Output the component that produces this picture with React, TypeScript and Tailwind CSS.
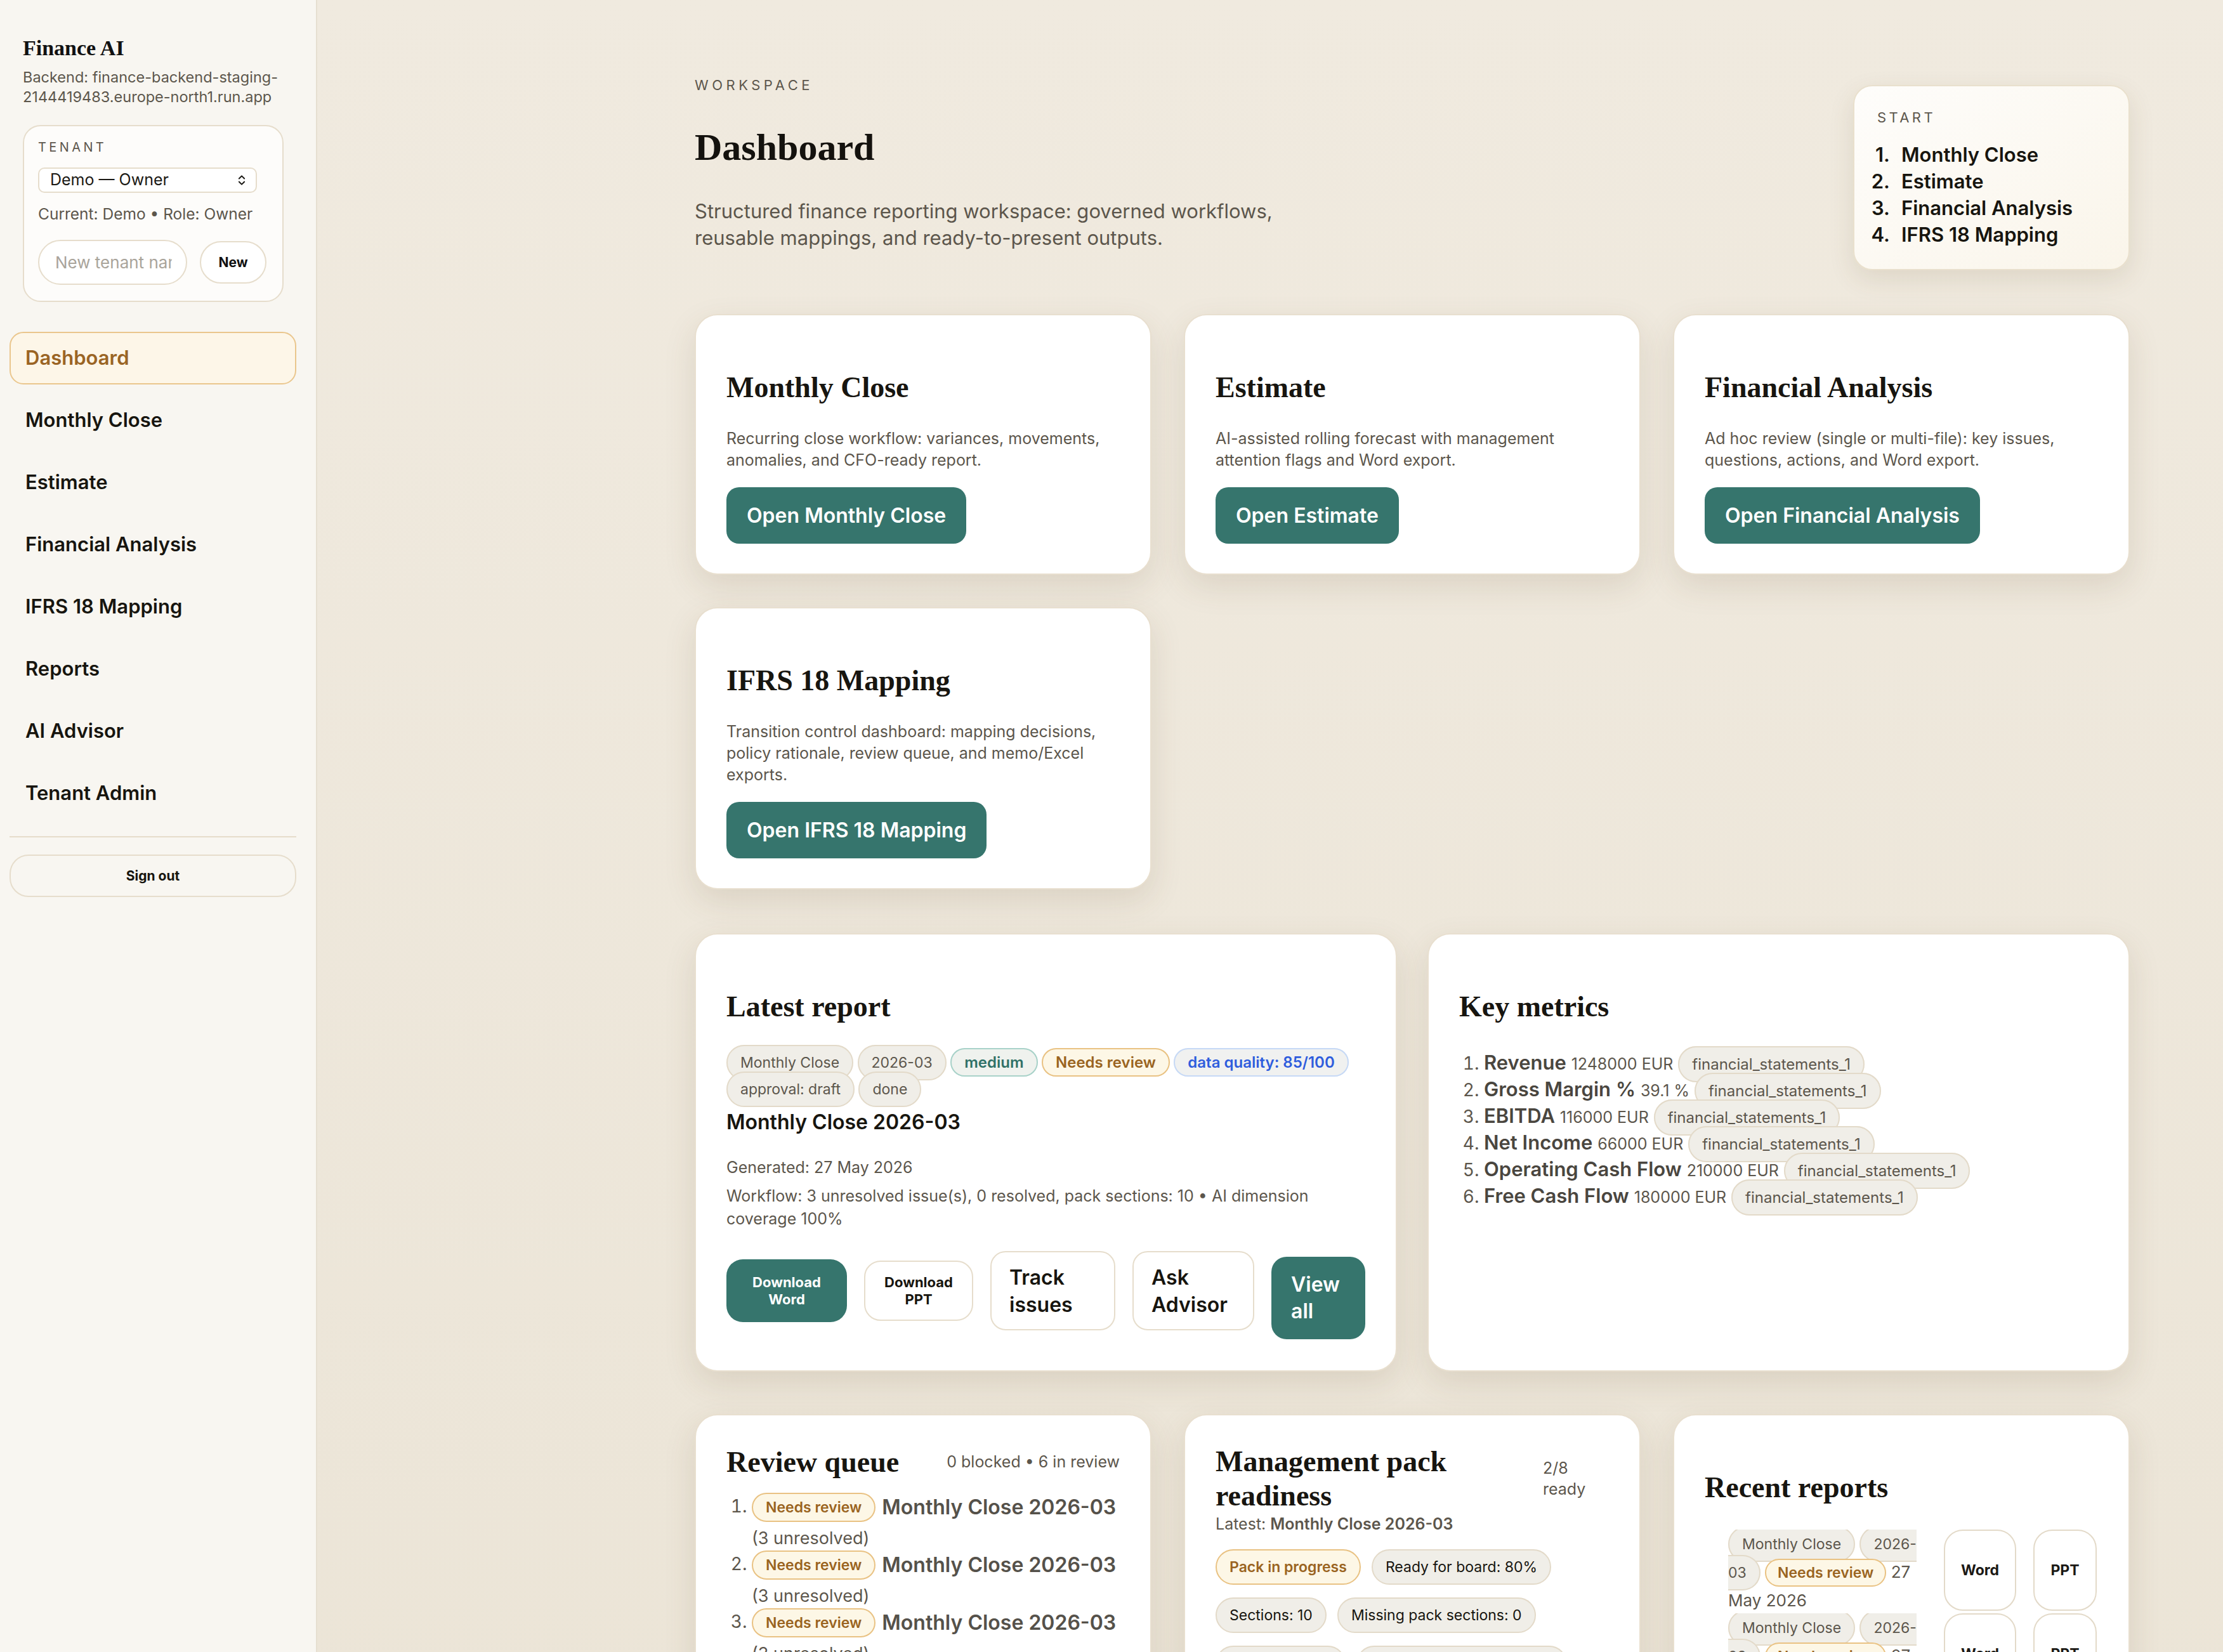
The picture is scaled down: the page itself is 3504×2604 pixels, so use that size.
import React from "react";
import { ChevronsUpDown } from "lucide-react";

const serif = "font-['Liberation_Serif','Times_New_Roman',serif]";

const cardBase =
  "rounded-[36px] border-2 border-[#e8dfcf] bg-white shadow-[0_18px_50px_rgba(94,72,36,0.13)]";

function GrayPill({ children, big }: { children: React.ReactNode; big?: boolean }) {
  return (
    <span
      className={
        big
          ? "inline rounded-full border-2 border-[#e3dac9] bg-[#f0eee8] px-[20px] py-[12px] text-[24px] text-[#5c564c]"
          : "inline rounded-full border-2 border-[#e3dac9] bg-[#f0eee8] px-[20px] py-[12px] text-[23px] text-[#5c564c]"
      }
    >
      {children}
    </span>
  );
}

function AmberPill({ children }: { children: React.ReactNode }) {
  return (
    <span className="inline rounded-full border-2 border-[#e9c283] bg-[#fdf7e6] px-[18px] py-[6px] text-[23px] font-semibold text-[#9a6421]">
      {children}
    </span>
  );
}

function WorkflowCard({ title, desc, cta }: { title: string; desc: React.ReactNode; cta: string }) {
  return (
    <div className={`${cardBase} px-[48px] pt-[86px] pb-[47px]`}>
      <h2 className={`${serif} text-[46px] font-bold leading-[56px] text-[#171510]`}>{title}</h2>
      <p className="mt-[35px] text-[25px] leading-[34px] text-[#5c564c]">{desc}</p>
      <button className="mt-[26px] flex h-[89px] items-center rounded-[20px] bg-[#36756d] px-[32px] text-[32px] font-semibold text-white">
        {cta}
      </button>
    </div>
  );
}

const navItems = [
  "Dashboard",
  "Monthly Close",
  "Estimate",
  "Financial Analysis",
  "IFRS 18 Mapping",
  "Reports",
  "AI Advisor",
  "Tenant Admin",
];

const startItems = ["Monthly Close", "Estimate", "Financial Analysis", "IFRS 18 Mapping"];

const metrics: [string, string][] = [
  ["Revenue", "1248000 EUR"],
  ["Gross Margin %", "39.1 %"],
  ["EBITDA", "116000 EUR"],
  ["Net Income", "66000 EUR"],
  ["Operating Cash Flow", "210000 EUR"],
  ["Free Cash Flow", "180000 EUR"],
];

function RecentItem() {
  return (
    <li className="flex items-start">
      <div className="h-[128px] w-[304px] shrink-0 overflow-hidden whitespace-nowrap text-[26px] leading-[43px] text-[#5c564c]">
        <GrayPill>Monthly Close</GrayPill>{" "}
        <GrayPill>
          2026-
          <br />
          03
        </GrayPill>{" "}
        <AmberPill>Needs review</AmberPill> 27
        <br />
        May 2026
      </div>
      <button className="ml-[36px] flex h-[128px] w-[114px] shrink-0 items-center justify-center rounded-[30px] border-2 border-[#e3dac9] bg-white text-[23px] font-bold text-[#1b1915]">
        Word
      </button>
      <button className="ml-[27px] flex h-[128px] w-[100px] shrink-0 items-center justify-center rounded-[30px] border-2 border-[#e3dac9] bg-white text-[23px] font-bold text-[#1b1915]">
        PPT
      </button>
    </li>
  );
}

export default function App() {
  return (
    <div className="flex min-h-screen w-full font-['Inter','Liberation_Sans',sans-serif] text-[#1b1915]">
      {/* Sidebar */}
      <aside className="w-[500px] shrink-0 border-r-2 border-[#e6dfd1] bg-[#f8f6f1] pl-[15px] pr-[31px] pt-[56px]">
        <div className="px-[21px]">
          <div className={`${serif} text-[34px] font-bold leading-[40px] text-[#111]`}>Finance AI</div>
          <div className="mt-[10px] whitespace-nowrap text-[23.5px] leading-[31px] text-[#5c564c]">
            Backend: finance-backend-staging-
            <br />
            2144419483.europe-north1.run.app
          </div>
        </div>

        <div className="ml-[21px] mt-[29px] w-[411px] rounded-[28px] border-2 border-[#e6ddcc] bg-[#fdfcfa] px-[22px] pb-[25px] pt-[21px]">
          <div className="text-[20px] leading-[24px] tracking-[0.22em] text-[#5c564c]">TENANT</div>
          <div className="mt-[20px] flex h-[40px] w-[345px] items-center justify-between rounded-[10px] border-2 border-[#e6ddcc] bg-white pl-[17px] pr-[12px] text-[25px] text-[#1b1915]">
            <span>Demo — Owner</span>
            <ChevronsUpDown size={20} strokeWidth={2.4} />
          </div>
          <div className="mt-[18px] whitespace-nowrap text-[24.5px] leading-[30px] text-[#5c564c]">
            Current: Demo • Role: Owner
          </div>
          <div className="mt-[26px] flex items-center gap-[20px]">
            <div className="flex h-[71px] w-[235px] items-center rounded-full border-2 border-[#e6ddcc] bg-white pl-[25px] pr-[22px]">
              <span className="block w-full overflow-hidden whitespace-nowrap text-[26px] text-[#a9a49b]">
                New tenant name
              </span>
            </div>
            <button className="flex h-[67px] w-[105px] items-center justify-center rounded-full border-2 border-[#e6ddcc] bg-white text-[21px] font-bold text-[#111]">
              New
            </button>
          </div>
        </div>

        <nav className="mt-[47px] flex flex-col gap-[15px]">
          {navItems.map((item, i) => (
            <div
              key={item}
              className={
                i === 0
                  ? "flex h-[83px] items-center rounded-[22px] border-2 border-[#eac68d] bg-[#fdf6e8] px-[23px] text-[31px] font-semibold text-[#9a6424]"
                  : "flex h-[83px] items-center rounded-[22px] border-2 border-transparent px-[23px] text-[31px] font-semibold text-[#17150f]"
              }
            >
              {item}
            </div>
          ))}
        </nav>

        <div className="mt-[26px] border-t-2 border-[#e6dccb]" />
        <button className="mt-[27px] flex h-[67px] w-full items-center justify-center rounded-[30px] border-2 border-[#e6ddcc] text-[21px] font-bold text-[#17150f]">
          Sign out
        </button>
      </aside>

      {/* Main */}
      <main className="flex-1 bg-linear-to-b from-[#f0eadf] to-[#ebe4d6]">
        <div className="ml-[595px] flex w-[2262px] flex-col pb-[120px] pt-[119px]">
          {/* Header */}
          <div className="flex items-start justify-between">
            <div>
              <div className="text-[22px] leading-[30px] tracking-[0.25em] text-[#5c564c]">WORKSPACE</div>
              <h1 className={`${serif} mt-[47px] text-[60px] font-bold leading-[72px] text-[#14120e]`}>Dashboard</h1>
              <p className="mt-[44px] text-[31px] leading-[42px] text-[#5c564c]">
                Structured finance reporting workspace: governed workflows,
                <br />
                reusable mappings, and ready-to-present outputs.
              </p>
            </div>
            <div className="mt-[15px] w-[436px] rounded-[30px] border-2 border-[#e9e0cd] bg-linear-to-br from-[#fefdfb] to-[#faf5ea] px-[36px] pb-[33px] pt-[34px] shadow-[0_14px_40px_rgba(94,72,36,0.12)]">
              <div className="text-[22px] leading-[30px] tracking-[0.2em] text-[#5c564c]">START</div>
              <ol className="-ml-[14px] mt-[23px] text-[31px] font-semibold leading-[42px] text-[#17150f]">
                {startItems.map((s, i) => (
                  <li key={s} className="flex">
                    <span className="w-[34px] shrink-0 text-right">{i + 1}.</span>
                    <span className="ml-[18px]">{s}</span>
                  </li>
                ))}
              </ol>
            </div>
          </div>

          {/* Workflow cards */}
          <div className="mt-[69px] grid grid-cols-3 gap-x-[51px] gap-y-[51px]">
            <WorkflowCard
              title="Monthly Close"
              desc={
                <>
                  Recurring close workflow: variances, movements,
                  <br />
                  anomalies, and CFO-ready report.
                </>
              }
              cta="Open Monthly Close"
            />
            <WorkflowCard
              title="Estimate"
              desc={
                <>
                  AI-assisted rolling forecast with management
                  <br />
                  attention flags and Word export.
                </>
              }
              cta="Open Estimate"
            />
            <WorkflowCard
              title="Financial Analysis"
              desc={
                <>
                  Ad hoc review (single or multi-file): key issues,
                  <br />
                  questions, actions, and Word export.
                </>
              }
              cta="Open Financial Analysis"
            />
            <WorkflowCard
              title="IFRS 18 Mapping"
              desc={
                <>
                  Transition control dashboard: mapping decisions,
                  <br />
                  policy rationale, review queue, and memo/Excel
                  <br />
                  exports.
                </>
              }
              cta="Open IFRS 18 Mapping"
            />
          </div>

          {/* Latest report + Key metrics */}
          <div className="mt-[69px] grid grid-cols-2 gap-[48px]">
            <div className={`${cardBase} px-[48px] pt-[86px] pb-[49px]`}>
              <h2 className={`${serif} text-[46px] font-bold leading-[56px] text-[#171510]`}>Latest report</h2>
              <div className="mt-[39px] whitespace-nowrap text-[23px] leading-[42px]">
                <GrayPill>Monthly Close</GrayPill>{" "}
                <GrayPill>2026-03</GrayPill>{" "}
                <span className="inline rounded-full border-2 border-[#a8d2c9] bg-[#eff2ee] px-[20px] py-[6px] text-[24px] font-semibold text-[#2f7167]">
                  medium
                </span>{" "}
                <span className="inline rounded-full border-2 border-[#e9c283] bg-[#fdf7e6] px-[20px] py-[6px] text-[24px] font-semibold text-[#9a6421]">
                  Needs review
                </span>{" "}
                <span className="inline rounded-full border-2 border-[#c6d9f6] bg-[#f0f1f0] px-[20px] py-[6px] text-[24px] font-semibold text-[#2f5ddd]">
                  data quality: 85/100
                </span>
                <br />
                <GrayPill>approval: draft</GrayPill>{" "}
                <GrayPill>done</GrayPill>
              </div>
              <div className="mt-[11px] text-[32px] font-semibold leading-[40px] text-[#17150f]">Monthly Close 2026-03</div>
              <div className="mt-[34px] text-[25px] leading-[34px] text-[#5c564c]">Generated: 27 May 2026</div>
              <div className="mt-[10px] text-[25px] leading-[36px] text-[#5c564c]">
                Workflow: 3 unresolved issue(s), 0 resolved, pack sections: 10 • AI dimension
                <br />
                coverage 100%
              </div>
              <div className="mt-[33px] flex items-start gap-[27px]">
                <button className="mt-[13px] flex h-[99px] w-[190px] items-center justify-center rounded-[26px] bg-[#36756d] text-center text-[22px] font-bold leading-[27px] text-white">
                  Download
                  <br />
                  Word
                </button>
                <button className="mt-[15px] flex h-[95px] w-[172px] items-center justify-center rounded-[26px] border-2 border-[#e6ddcc] bg-white text-center text-[22px] font-bold leading-[27px] text-[#17150f]">
                  Download
                  <br />
                  PPT
                </button>
                <button className="flex h-[125px] w-[197px] items-center rounded-[24px] border-2 border-[#e6ddcc] bg-white px-[28px] text-left text-[32px] font-semibold leading-[43px] text-[#17150f]">
                  Track
                  <br />
                  issues
                </button>
                <button className="flex h-[125px] w-[192px] items-center rounded-[24px] border-2 border-[#e6ddcc] bg-white px-[28px] text-left text-[32px] font-semibold leading-[43px] text-[#17150f]">
                  Ask
                  <br />
                  Advisor
                </button>
                <button className="mt-[9px] flex h-[130px] w-[148px] items-center rounded-[24px] bg-[#36756d] px-[31px] text-left text-[32px] font-semibold leading-[42px] text-white">
                  View
                  <br />
                  all
                </button>
              </div>
            </div>

            <div className={`${cardBase} px-[48px] pt-[86px] pb-[49px]`}>
              <h2 className={`${serif} text-[46px] font-bold leading-[56px] text-[#171510]`}>Key metrics</h2>
              <ol className="mt-[39px] list-decimal pl-[39px] text-[28px] leading-[42px] text-[#5c564c]">
                {metrics.map(([k, v]) => (
                  <li key={k} className="h-[42px] whitespace-nowrap leading-[42px]">
                    <span className="text-[31px] font-semibold text-[#4a463f]">{k}</span>{" "}
                    <span className="text-[25px] text-[#5c564c]">{v}</span>{" "}
                    <GrayPill big>financial_statements_1</GrayPill>
                  </li>
                ))}
              </ol>
            </div>
          </div>

          {/* Bottom row */}
          <div className="mt-[67px] grid grid-cols-3 items-start gap-[51px]">
            {/* Review queue */}
            <div className={`${cardBase} px-[48px] pt-[46px] pb-[48px]`}>
              <div className="flex items-center justify-between">
                <h2 className={`${serif} text-[46px] font-bold leading-[56px] text-[#171510]`}>Review queue</h2>
                <span className="text-[25px] text-[#5c564c]">0 blocked • 6 in review</span>
              </div>
              <ol className="mt-[17px] list-decimal pl-[40px] text-[28px] leading-[48px] text-[#5c564c]">
                {[1, 2, 3, 4, 5, 6].map((n) => (
                  <li key={n}>
                    <div className="flex h-[48px] items-center whitespace-nowrap">
                      <span className="inline-flex h-[46px] items-center rounded-full border-2 border-[#e9c283] bg-[#fdf7e6] px-[20px] text-[23px] font-semibold text-[#9a6421]">
                        Needs review
                      </span>
                      <span className="ml-[10px] text-[32px] font-semibold text-[#55514a]">Monthly Close 2026-03</span>
                    </div>
                    <div className="mt-[9px] text-[27px] leading-[32px] text-[#5c564c]">(3 unresolved)</div>
                  </li>
                ))}
              </ol>
            </div>

            {/* Management pack */}
            <div className={`${cardBase} px-[48px] pt-[46px] pb-[48px]`}>
              <div className="flex items-center justify-between gap-[24px]">
                <h2 className={`${serif} text-[46px] font-bold leading-[54px] text-[#171510]`}>
                  Management pack
                  <br />
                  readiness
                </h2>
                <div className="w-[104px] shrink-0 text-[25px] leading-[33px] text-[#5c564c]">
                  2/8
                  <br />
                  ready
                </div>
              </div>
              <div className="text-[25px] leading-[34px] text-[#5c564c]">
                Latest: <span className="font-semibold">Monthly Close 2026-03</span>
              </div>
              <div className="mt-[23px] flex flex-wrap gap-x-[17px] gap-y-[20px]">
                <span className="inline-flex h-[56px] items-center rounded-full border-2 border-[#e9c283] bg-[#fdf7e6] px-[20px] text-[23px] font-semibold text-[#9a6421]">
                  Pack in progress
                </span>
                <span className="inline-flex h-[56px] items-center rounded-full border-2 border-[#e3dac9] bg-[#f0eee8] px-[20px] text-[23px] text-[#17150f]">
                  Ready for board: 80%
                </span>
                <span className="inline-flex h-[56px] items-center rounded-full border-2 border-[#e3dac9] bg-[#f0eee8] px-[20px] text-[23px] text-[#17150f]">
                  Sections: 10
                </span>
                <span className="inline-flex h-[56px] items-center rounded-full border-2 border-[#e3dac9] bg-[#f0eee8] px-[20px] text-[23px] text-[#17150f]">
                  Missing pack sections: 0
                </span>
                <span className="inline-flex h-[56px] items-center rounded-full border-2 border-[#e3dac9] bg-[#f0eee8] px-[20px] text-[23px] text-[#17150f]">
                  Approval: draft
                </span>
                <span className="inline-flex h-[56px] items-center rounded-full border-2 border-[#e3dac9] bg-[#f0eee8] px-[20px] text-[23px] text-[#17150f]">
                  Open issues: 3 unresolved
                </span>
              </div>
            </div>

            {/* Recent reports */}
            <div className={`${cardBase} px-[48px] pt-[86px] pb-[48px]`}>
              <h2 className={`${serif} text-[46px] font-bold leading-[56px] text-[#171510]`}>Recent reports</h2>
              <ol className="mt-[38px] flex list-none flex-col gap-[4px] pl-[37px]">
                <RecentItem />
                <RecentItem />
                <RecentItem />
              </ol>
            </div>
          </div>
        </div>
      </main>
    </div>
  );
}
